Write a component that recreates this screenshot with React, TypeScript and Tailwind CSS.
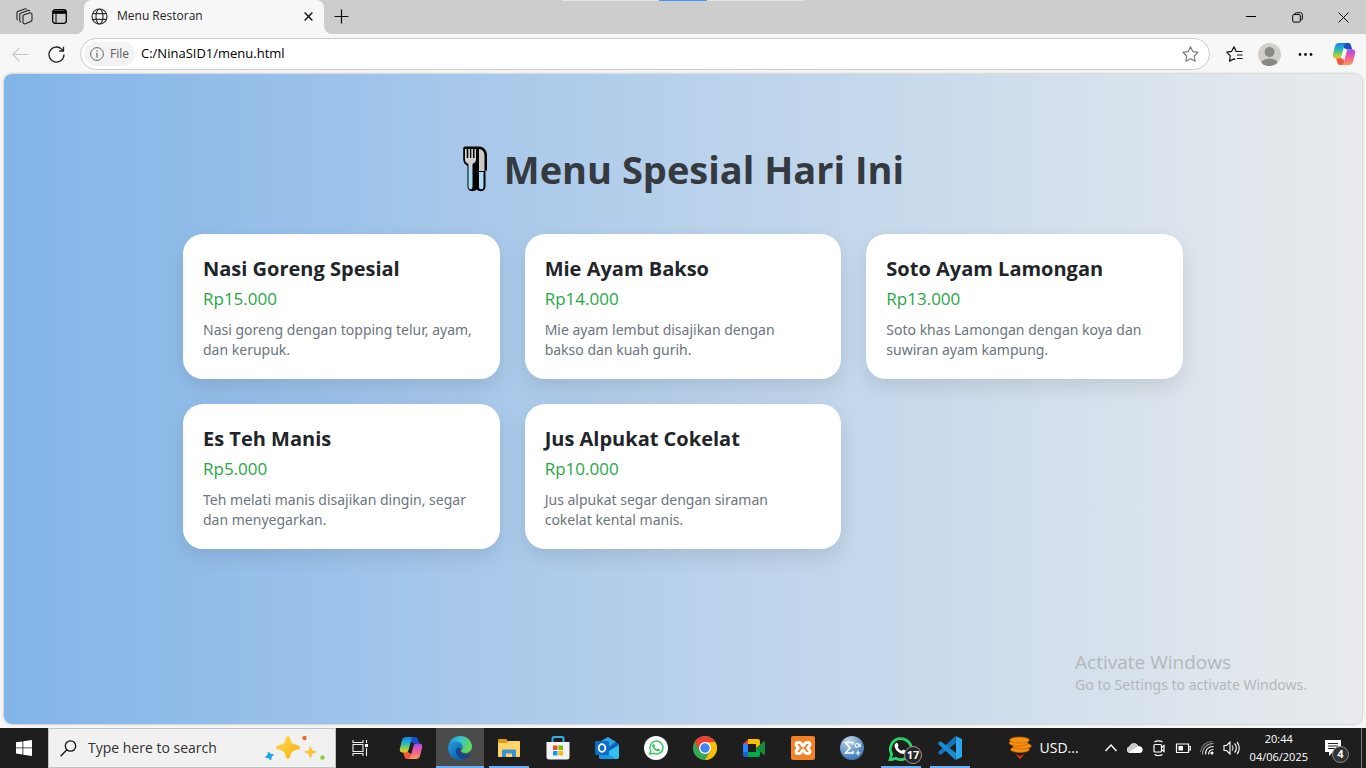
import React from "react";

type Dish = { name: string; price: string; description: string };

const dishes: Dish[] = [
  { name: "Nasi Goreng Spesial", price: "Rp15.000", description: "Nasi goreng dengan topping telur, ayam, dan kerupuk." },
  { name: "Mie Ayam Bakso", price: "Rp14.000", description: "Mie ayam lembut disajikan dengan bakso dan kuah gurih." },
  { name: "Soto Ayam Lamongan", price: "Rp13.000", description: "Soto khas Lamongan dengan koya dan suwiran ayam kampung." },
  { name: "Es Teh Manis", price: "Rp5.000", description: "Teh melati manis disajikan dingin, segar dan menyegarkan." },
  { name: "Jus Alpukat Cokelat", price: "Rp10.000", description: "Jus alpukat segar dengan siraman cokelat kental manis." },
];

function CopilotLogo({ id }: { id: string }) {
  return (
    <svg width="24" height="24" viewBox="0 0 24 24" aria-hidden="true">
      <defs>
        <linearGradient id={id + "a"} x1="0" y1="0" x2="0" y2="1">
          <stop offset="0" stopColor="#1b7fe8" />
          <stop offset=".4" stopColor="#20b8c8" />
          <stop offset=".72" stopColor="#8bd050" />
          <stop offset="1" stopColor="#f4c52c" />
        </linearGradient>
        <linearGradient id={id + "b"} x1="0" y1="0" x2="0" y2="1">
          <stop offset="0" stopColor="#a64bf0" />
          <stop offset=".5" stopColor="#f0609a" />
          <stop offset="1" stopColor="#ff9b52" />
        </linearGradient>
      </defs>
      <path d="M9 1h7.500c1.400 0 2 1 2.400 2.200L20.300 7.500H15L12 6z" fill="#1650cf" />
      <path d="M15 23H8c-1.400 0-2-.8-2.400-2L4 16h5l3 2z" fill="#ee5a3a" />
      <path d="M7 1h7.500c-1.500.5-2 2-2.400 3.500L9.500 14c-.5 1.700-1.300 2.500-3 2.500H3.700C1.400 16.500.3 15 .9 12.500L3 4C3.700 2 5 1 7 1z" fill={"url(#" + id + "a)"} />
      <path d="M17 23H9.500c1.500-.5 2-2 2.400-3.500L14.500 10c.5-1.700 1.300-2.500 3-2.500h2.800c2.300 0 3.400 1.500 2.800 4L21 20c-.7 2-2 3-4 3z" fill={"url(#" + id + "b)"} />
    </svg>
  );
}

function TitleBar() {
  return (
    <header className="flex h-[34px] bg-[#f7f7f7]">
      <div className="flex w-[84px] shrink-0 items-center gap-4 rounded-br-lg bg-[#cdcdcd] pl-4 pb-0.5">
        <button aria-label="Workspaces" className="flex size-5 shrink-0 items-center">
          <svg width="17" height="17" viewBox="0 0 17 17" fill="none" stroke="#222" strokeWidth="1.100" strokeLinejoin="round">
            <path d="M8 6.800 13.500 5c1.300-.4 2.500.3 2.500 1.500v5.300c0 .9-.5 1.500-1.300 1.800L9.500 15.800C8.200 16.200 7 15.500 7 14.300V8.200c0-.7.3-1.200 1-1.400z" />
            <path d="M4.800 14.300C4 14 3.800 13.500 3.800 12.800V6.600c0-.8.400-1.300 1.200-1.600l7-2.500c.8-.2 1.400 0 1.800.6" />
            <path d="M1.800 12C1.200 11.700 1 11.200 1 10.600V4.900c0-.8.4-1.300 1.200-1.600L8.800.9c.8-.3 1.500-.1 1.900.4" />
          </svg>
        </button>
        <button aria-label="Tab actions" className="flex size-5 shrink-0 items-center">
          <svg width="15" height="15" viewBox="0 0 15 15" fill="none" stroke="#000" strokeWidth="1.300">
            <rect x=".7" y=".7" width="13.600" height="13.600" rx="2.500" />
            <path d="M1 1.500h13v3.300H1z" fill="#000" stroke="none" />
            <path d="M4 4v10" strokeWidth="1" />
          </svg>
        </button>
      </div>
      <div className="flex w-60 bg-[#cdcdcd]">
        <div className="flex flex-1 items-center rounded-t-lg bg-[#f7f7f7] pl-[7px] pr-2 pb-0.5">
          <svg width="17" height="17" viewBox="0 0 17 17" fill="none" stroke="#333" strokeWidth="1.200">
            <circle cx="8.500" cy="8.500" r="7.500" />
            <ellipse cx="8.500" cy="8.500" rx="3.500" ry="7.500" />
            <path d="M1.700 5.700h13.600M1.700 11.300h13.600" />
          </svg>
          <span className="ml-[9px] flex-1 text-xs text-[#222]">Menu Restoran</span>
          <button aria-label="Close tab" className="flex size-4 items-center justify-center">
            <svg width="9" height="9" viewBox="0 0 9 9" stroke="#111" strokeWidth="1.400"><path d="m.6.600 7.800 7.800M8.400.600.6 8.400" /></svg>
          </button>
        </div>
      </div>
      <div className="flex flex-1 items-center rounded-bl-lg bg-[#cdcdcd] pl-[10px] pb-0.5">
        <button aria-label="New tab">
          <svg width="15" height="15" viewBox="0 0 15 15" stroke="#111" strokeWidth="1.200"><path d="M.5 7.500h14M7.500.5v14" /></svg>
        </button>
      </div>
      <div className="flex items-center bg-[#cdcdcd]">
        <button aria-label="Minimize" className="flex h-full w-[46px] items-center justify-center">
          <svg width="10" height="10" viewBox="0 0 10 10" stroke="#000"><path d="M0 4.500h10" /></svg>
        </button>
        <button aria-label="Restore" className="flex h-full w-[46px] items-center justify-center">
          <svg width="11" height="11" viewBox="0 0 11 11" fill="none" stroke="#000">
            <rect x=".7" y="2.500" width="7.600" height="7.600" rx="1.200" /><path d="M3 2.300V2C3 1.200 3.400.7 4.200.7h4.300c1.200 0 1.800.7 1.800 1.800V7c0 .6-.5 1-1.500 1" />
          </svg>
        </button>
        <button aria-label="Close" className="flex h-full w-[46px] items-center justify-center">
          <svg width="11" height="11" viewBox="0 0 11 11" stroke="#000"><path d="m.5.500 10 10M10.500.500l-10 10" /></svg>
        </button>
      </div>
    </header>
  );
}

function Toolbar() {
  return (
    <div className="flex h-10 items-center bg-[#f7f7f7] pl-3 pr-[10px]">
      <button aria-label="Back" className="w-9">
        <svg width="17" height="15" viewBox="0 0 17 15" fill="none" stroke="#c6c6c6" strokeWidth="1.200"><path d="M16.500 7.500H.8M7.500.7.800 7.500l6.700 6.800" /></svg>
      </button>
      <button aria-label="Refresh" className="w-8">
        <svg width="17" height="17" viewBox="0 0 17 17" fill="none" stroke="#222" strokeWidth="1.300"><path d="M16 8.500a7.500 7.500 0 1 1-2.300-5.400L15.500 5M15.500.8V5h-4.300" /></svg>
      </button>
      <div className="flex h-8 flex-1 items-center rounded-full border border-[#cbcbcb] bg-white pl-[3px] pr-[10px]">
        <span className="flex h-6 items-center gap-1.5 rounded-full bg-[#f3f3f3] px-1.5 text-xs text-[#5c5c5c]">
          <svg width="14" height="14" viewBox="0 0 14 14" fill="none" stroke="#666"><circle cx="7" cy="7" r="6.400" /><path d="M7 6v4.500M7 3.500v1.200" strokeWidth="1.200" /></svg>
          File
        </span>
        <input aria-label="Address" defaultValue="C:/NinaSID1/menu.html" className="ml-1.5 min-w-0 flex-1 bg-transparent text-[13px] text-black outline-none" />
        <button aria-label="Add to favorites">
          <svg width="17" height="16" viewBox="0 0 17 16" fill="none" stroke="#777" strokeWidth="1.100" strokeLinejoin="round"><path d="m8.500.8 2.300 4.800 5.300.7-3.900 3.700 1 5.200-4.700-2.500-4.700 2.500 1-5.200L.9 6.300l5.300-.7z" /></svg>
        </button>
      </div>
      <button aria-label="Favorites" className="ml-4">
        <svg width="17" height="16" viewBox="0 0 17 16" fill="none" stroke="#111" strokeWidth="1.200" strokeLinejoin="round"><path d="M9.500 5.500H16.500M11 9h5.500M11 12.500h5.500M10.200 5.300 8 .8 5.700 5.300.8 6.200l3.500 3.700-.8 5.200L8 12.900l1.300.6" /></svg>
      </button>
      <button aria-label="Profile" className="ml-[15px]">
        <svg width="23" height="23" viewBox="0 0 23 23"><defs><clipPath id="avatar"><circle cx="11.500" cy="11.500" r="11.500" /></clipPath></defs><g clipPath="url(#avatar)"><path d="M0 0h23v23H0z" fill="#d0cec9" /><circle cx="11.500" cy="9" r="5" fill="#8b8783" /><ellipse cx="11.500" cy="21" rx="8.500" ry="5.500" fill="#8b8783" /></g></svg>
      </button>
      <button aria-label="Settings and more" className="ml-[17px]">
        <svg width="15" height="5" viewBox="0 0 15 5" fill="#111"><circle cx="2" cy="2.500" r="1.400" /><circle cx="7.500" cy="2.500" r="1.400" /><circle cx="13" cy="2.500" r="1.400" /></svg>
      </button>
      <button aria-label="Copilot" className="ml-[19px]"><CopilotLogo id="side" /></button>
    </div>
  );
}

function Cutlery() {
  return (
    <svg width="26" height="48" viewBox="0 0 26 48" aria-hidden="true">
      <path d="M3 1.500h14c5 0 8 4 8 9v15h-1.500v16c0 5-6 6-9 3-3 3-9 2-9-3V21C2.500 19 1.200 17 1.200 14V3.500c0-1.200.7-2 1.800-2z" fill="#000" />
      <path d="M17 4c4 .5 5.500 3.500 5.500 7v15H17z" fill="#c9c9c9" />
      <path d="M17 27h4.500v15c0 3-4.500 3-4.500 0z" fill="#aadcf5" />
      <path d="M3 4v11c0 2 2 3 3.500 4v4h4v-4C12 18 14 17 14 15V4h-1.500v9H11V4H9.300v9H8V4H6.300v9H4.700V4z" fill="#d0d0d0" />
      <path d="M6.500 23h4v19c0 3-4 3-4 0z" fill="#aadcf5" />
    </svg>
  );
}

function MenuPage() {
  return (
    <main className="relative mx-1 mb-1 flex-1 rounded-lg bg-linear-to-r from-[#82b4e8] via-[#b8d1eb] to-[#e9ebed] px-5 pt-[65px] shadow-[0_0_3px_rgba(0,0,0,0.3)]">
      <h1 className="flex items-center justify-center gap-4 text-[38px] leading-[60px] font-bold text-[#343a40]">
        <Cutlery />
        Menu Spesial Hari Ini
      </h1>
      <div className="mx-auto mt-[35px] grid max-w-[1000px] grid-cols-3 gap-[25px]">
        {dishes.map((dish) => (
          <article key={dish.name} className="rounded-[20px] bg-white px-5 pt-5 pb-[19px] shadow-[0_8px_20px_rgba(0,0,0,0.1)]">
            <h2 className="text-xl leading-[30px] font-bold text-[#212529]">{dish.name}</h2>
            <p className="text-[17px] leading-[30px] text-[#28a745]">{dish.price}</p>
            <p className="mt-1.5 pr-1.5 font-['Noto_Sans',sans-serif] text-sm leading-5 text-[#6c757d]">{dish.description}</p>
          </article>
        ))}
      </div>
      <aside className="absolute right-[55px] bottom-[28px] text-[#b3b7bb]">
        <p className="text-[19px] leading-6">Activate Windows</p>
        <p className="font-['Noto_Sans',sans-serif] text-sm leading-[22px]">Go to Settings to activate Windows.</p>
      </aside>
    </main>
  );
}

const whatsappOutline = "M3.500 20.500 5 15.500A9 9 0 1 1 8.500 19z";
const phone = "M8.300 6.500c.5-.5 1.300-.5 1.600.2l.8 1.800c.2.500-.8 1.400-.7 1.800.8 1.600 2 2.600 3.600 3.300.5.200 1.300-1.300 1.800-1.100l1.900.9c.6.300.5 1.100.2 1.700-.5 1-1.900 1.500-3 1.300-3.800-.7-6.600-3.600-7.400-6.800-.3-1.200.3-2.300 1.200-3.100z";

const apps: { label: string; running?: boolean; active?: boolean; icon: React.ReactNode }[] = [
  { label: "Copilot", icon: <CopilotLogo id="task" /> },
  {
    label: "Microsoft Edge", running: true, active: true,
    icon: (
      <svg width="26" height="26" viewBox="0 0 26 26">
        <defs>
          <linearGradient id="edgeTop" x1="0" x2="1" y1="0" y2=".3"><stop stopColor="#2296e2" /><stop offset=".5" stopColor="#35c2d4" /><stop offset="1" stopColor="#65d957" /></linearGradient>
          <linearGradient id="edgeSide" x2="1" y2="1"><stop stopColor="#239ce2" /><stop offset="1" stopColor="#0b549e" /></linearGradient>
        </defs>
        <path d="M1.500 11C2.500 5 7 1 13 1c7 0 12 5 12 10.500 0 4-3 6.500-6.500 6.500-3 0-4.500-1.300-4.500-2.200 0-.8 1.500-1.300 1.500-3.500C15.500 9 12 7 8 7c-3 0-5.500 1.700-6.500 4z" fill="url(#edgeTop)" />
        <path d="M1 13c0-4 3.500-6.500 8-6.500 3.500 0 6.500 2.300 6.500 5.300 0 1-.4 2-1 2.700-2-2.300-5-1.500-5 1.800 0 4 4 8 9.500 7-2 1.200-4 1.700-6 1.700-7 0-12-5.500-12-12z" fill="url(#edgeSide)" />
        <path d="M10 13c-3 5 1 10.500 7 10.700 3-.5 5-2.200 6.700-4.200.4-.6 0-1-.5-.7-5 2.200-10.500.2-11-3.300-.1-1.300.3-1.800 1-2.300-1-.8-2.300-.9-3.200-.2z" fill="#11478c" />
      </svg>
    ),
  },
  {
    label: "File Explorer", running: true,
    icon: (
      <svg width="22" height="20" viewBox="0 0 22 20"><path d="M0 2c0-.6.400-1 1-1h7l2 2v4H0z" fill="#e19c13" /><path d="M0 5h9l1.500-2H21c.6 0 1 .4 1 1v14c0 .6-.4 1-1 1H1c-.6 0-1-.4-1-1z" fill="#fcd467" /><path d="M4 19v-6c0-1 .6-1.500 1.500-1.500h11c1 0 1.500.5 1.500 1.500v6h-4v-3.500H8V19z" fill="#3b91d6" /></svg>
    ),
  },
  {
    label: "Microsoft Store",
    icon: (
      <svg width="24" height="26" viewBox="0 0 24 26"><path d="M.5 7h23v15c0 1.700-1 2.500-2.500 2.500H3c-1.500 0-2.500-.8-2.500-2.500z" fill="#f3f3f3" /><path d="M6.500 7V3.500c0-1 .5-1.500 1.500-1.500h8c1 0 1.500.5 1.500 1.500V7" fill="none" stroke="#2ab1e6" strokeWidth="2" /><path d="M7 10.500h4.500V15H7z" fill="#f25022" /><path d="M12.500 10.500H17V15h-4.500z" fill="#7fba00" /><path d="M7 16h4.500v4.500H7z" fill="#00a4ef" /><path d="M12.500 16H17v4.500h-4.500z" fill="#ffb900" /></svg>
    ),
  },
  {
    label: "Outlook",
    icon: (
      <svg width="26" height="24" viewBox="0 0 26 24"><path d="m5 8 9-6.500L25 8v3L8 18z" fill="#1265b5" /><path d="m7 5 7-4 8 5-9 6z" fill="#2fa4e7" /><path d="M25 9v12c0 1-.8 2-2 2H7c-1 0-2-.8-2-2z" fill="#35c0f2" /><path d="m5 13 17 10H7c-1 0-2-.8-2-2z" fill="#1599df" /><rect x="1" y="5" width="14" height="14" rx="1.200" fill="#0f6cc4" /><ellipse cx="8" cy="12" rx="3.300" ry="3.800" fill="none" stroke="#fff" strokeWidth="1.800" /></svg>
    ),
  },
  {
    label: "WhatsApp Business",
    icon: (
      <svg width="24" height="24" viewBox="0 0 24 24"><circle cx="12" cy="12" r="12" fill="#fff" /><g transform="translate(3.200 3.500) scale(.72)"><path d={whatsappOutline} fill="none" stroke="#35c85a" strokeWidth="2" /><path d={phone} fill="#35c85a" /></g></svg>
    ),
  },
  {
    label: "Google Chrome",
    icon: (
      <svg width="24" height="24" viewBox="0 0 24 24"><circle cx="12" cy="12" r="12" fill="#34a853" /><path d="M12 0c4.400 0 8.300 2.400 10.400 6H12L6.800 15 1.600 6C3.700 2.400 7.500 0 12 0z" fill="#ea4335" /><path d="M22.400 6A12 12 0 0 1 12 24l5.200-9L12 6z" fill="#fbbc05" /><circle cx="12" cy="12" r="6" fill="#fff" /><circle cx="12" cy="12" r="4.700" fill="#4285f4" /></svg>
    ),
  },
  {
    label: "Google Meet",
    icon: (
      <svg width="22" height="20" viewBox="0 0 22 20"><path d="M0 6 5.500 1v5z" fill="#ea4335" /><path d="M0 6h5v8H0z" fill="#2684fc" /><path d="M0 14h5v5H2c-1 0-2-.8-2-2z" fill="#1565d8" /><path d="M5 1h10c1 0 2 .8 2 2v5l-4 3V6H5z" fill="#ffba00" /><path d="M5 14h8v-4l4 3v4c0 1-.8 2-2 2H5z" fill="#00ac47" /><path d="m13 10 7.500-6.500c.6-.5 1.500-.2 1.500.6v12c0 .8-.9 1-1.500.6z" fill="#18883a" /></svg>
    ),
  },
  {
    label: "XAMPP",
    icon: (
      <svg width="24" height="24" viewBox="0 0 24 24"><rect width="24" height="24" rx="2" fill="#f48024" /><path d="M7 6.500h1.500c2.500 0 2 3.500 3.500 3.500s1-3.500 3.500-3.500H17c2.500 0 2.500 3 .8 4-1.300.8-1.300 2.200 0 3 1.700 1 1.700 4-.8 4h-1.500c-2.500 0-2-3.500-3.500-3.500s-1 3.500-3.500 3.500H7c-2.500 0-2.500-3-.8-4 1.300-.8 1.300-2.200 0-3-1.700-1-1.700-4 .8-4z" fill="none" stroke="#fff" strokeWidth="3" /></svg>
    ),
  },
  {
    label: "SPSS",
    icon: (
      <svg width="24" height="24" viewBox="0 0 24 24"><defs><radialGradient id="stat" cx=".35" cy=".2" r=".8"><stop stopColor="#bfd7ed" /><stop offset="1" stopColor="#3b76b1" /></radialGradient></defs><circle cx="12" cy="12" r="12" fill="url(#stat)" /><path d="M13 8.500V6.500H5.500L10 12l-4.500 5H13v-2" fill="none" stroke="#fff" strokeWidth="1.600" /><path d="M20.500 7.500c-1 4-5 5-5.300 2-.3-3 4-2.500 5.600 1.500M15.500 17h5M18 14.500v5" fill="none" stroke="#fff" strokeWidth="1.200" /></svg>
    ),
  },
  {
    label: "WhatsApp", running: true,
    icon: (
      <span className="relative flex">
        <svg width="26" height="26" viewBox="1 -1 24 24"><path d={whatsappOutline} transform="translate(-1 0) scale(1.080)" fill="none" stroke="#26d366" strokeWidth="2.400" /><path d={phone} fill="#fff" /></svg>
        <span className="absolute top-[11px] left-4 flex size-[18px] items-center justify-center rounded-full border border-[#999] bg-[#262626] text-[11px] font-bold text-white">17</span>
      </span>
    ),
  },
  {
    label: "Visual Studio Code", running: true,
    icon: (
      <svg width="24" height="24" viewBox="0 0 24 24"><path d="m17.500 0 .5 7L3 18.500c-.4.3-.8.300-1.200 0L.5 17.300c-.5-.5-.5-1 0-1.500z" fill="#1477bd" /><path d="M17.500 24 .5 8.200c-.5-.5-.5-1 0-1.500l1.300-1.200c.4-.3.800-.3 1.200 0L18 17z" fill="#1a8dd5" /><path d="M17.500 0 23 2.500c.6.300 1 .8 1 1.500v16c0 .7-.4 1.200-1 1.500L17.500 24l.5-1V1z" fill="#2ba7ec" /></svg>
    ),
  },
];

function Taskbar() {
  return (
    <footer className="flex h-10 items-stretch bg-[#1e1e1e] text-white">
      <button aria-label="Start" className="flex w-12 items-center justify-center">
        <svg width="16" height="16" viewBox="0 0 16 16" fill="#fff"><path d="M0 2.300 6.500 1.400v6.100H0zM7.300 1.300 16 0v7.500H7.300zM0 8.300h6.500v6.200L0 13.600zM7.300 8.300H16V16l-8.700-1.300z" /></svg>
      </button>
      <label className="flex w-72 items-center border border-[#c2c2c2] bg-[#f1f1f1] pl-[11px] pr-2">
        <svg width="17" height="17" viewBox="0 0 17 17" fill="none" stroke="#111" strokeWidth="1.300"><circle cx="10.500" cy="6" r="5.200" /><path d="M6.900 9.700.6 16.200" /></svg>
        <input aria-label="Search" placeholder="Type here to search" className="ml-[11px] min-w-0 flex-1 bg-transparent text-sm text-black outline-none placeholder:text-[#303030]" />
        <svg width="62" height="26" viewBox="0 0 62 26">
          <defs><linearGradient id="spark" x2="1" y2="1"><stop stopColor="#ffdc4f" /><stop offset="1" stopColor="#f6ae10" /></linearGradient></defs>
          <path d="M23 1c2.500 0 2.300 5.800 4.500 7.500 1.700 1.300 7.500 1.700 7.500 4s-5.800 2.600-7.500 4C25.300 18.300 25.500 24 23 24s-2.300-5.700-4.500-7.500c-1.700-1.400-7.500-1.700-7.500-4s5.800-2.700 7.500-4C20.700 6.800 20.500 1 23 1z" fill="url(#spark)" />
          <path d="M45.500 11c1 0 1 3.500 2 4.300.8.700 4 .6 4 1.700s-3.200 1-4 1.700c-1 .8-1 4.300-2 4.300s-1-3.500-2-4.300c-.8-.7-4-.6-4-1.700s3.200-1 4-1.700c1-.8 1-4.300 2-4.300z" fill="#fcc334" />
          <path d="m3.500 17 2 2.300 3 .5-2.300 2-.5 3.200-2.200-2.300-3-.5 2.300-2z" fill="#18a6ea" stroke="#18a6ea" strokeLinejoin="round" />
          <circle cx="39.500" cy="3" r="2.200" fill="#f2652a" /><circle cx="57.500" cy="22.500" r="2.200" fill="#91c83e" />
        </svg>
      </label>
      <button aria-label="Task view" className="flex w-12 items-center justify-center">
        <svg width="17" height="16" viewBox="0 0 17 16" fill="none" stroke="#eee" strokeWidth="1.100"><path d="M1 0v2.500h10V0M1 16v-2.500h10V16M1 4.500h10v7H1zM14.500 0v3M14.500 8v8" /><path d="M13 4h3v3h-3z" fill="#fff" stroke="none" /></svg>
      </button>
      <nav aria-label="Pinned apps" className="ml-[3px] flex gap-px">
        {apps.map((app) => (
          <button key={app.label} aria-label={app.label} className={"relative flex w-12 items-center justify-center " + (app.active ? "bg-[#4b4b4b]" : "")}>
            {app.icon}
            {app.running && <span className={"absolute bottom-0 h-0.5 bg-[#69b0fa] " + (app.active ? "inset-x-0" : "inset-x-1")} />}
          </button>
        ))}
      </nav>
      <div className="ml-auto flex items-center">
        <button className="flex items-center gap-2 text-sm">
          <svg width="24" height="24" viewBox="0 0 24 24"><path d="M7.500 18 12 23.500l4.500-5.500-4.500 2z" fill="#d83b01" /><g fill="#f7900a" stroke="#b75d08" strokeWidth=".6"><ellipse cx="12" cy="13.500" rx="9.500" ry="3" /><ellipse cx="14" cy="10" rx="9.500" ry="3" /><ellipse cx="10.500" cy="7" rx="9.500" ry="3" /><ellipse cx="11.500" cy="4" rx="10" ry="3" /></g></svg>
          USD...
        </button>
        <div className="ml-[25px] flex items-center gap-2">
          <svg width="14" height="16" viewBox="0 0 14 16" fill="none" stroke="#fff" strokeWidth="1.400"><path d="m1.500 11 5.500-6 5.500 6" /></svg>
          <svg width="17" height="16" viewBox="0 0 17 16"><path d="M4 13a3.300 3.300 0 0 1-.5-6.500C5 2.500 10.500 2 12 6c3 0 4.700 1.700 4.700 3.700 0 2-1.500 3.300-3.200 3.300z" fill="#fff" /><path d="M3.500 6.500C5 2.500 10.500 2 12 6L3 12c-3-1.500-2.200-5 .5-5.500z" fill="#cacaca" /></svg>
          <svg width="16" height="16" viewBox="0 0 16 16" fill="none" stroke="#fff" strokeWidth="1.200"><rect x="3" y="4.500" width="7.500" height="7.500" rx="1" /><path d="m10.500 7.500 2.500-2v6l-2.500-2M3.500 2c2-1.500 6-1.500 8 0M3.500 14.500c2 1.500 6 1.500 8 0" /></svg>
          <svg width="17" height="16" viewBox="0 0 17 16" fill="none" stroke="#fff" strokeWidth="1.200"><path d="M1.500 4h12v8.500h-12zM13.500 6.500h1.800v3.500h-1.800" /><path d="M3.500 6h4.500v4.500H3.500z" fill="#fff" stroke="none" /></svg>
          <svg width="15" height="16" viewBox="0 0 15 16" fill="none" stroke="#fff" strokeWidth="1.100"><path d="M2.500 14.500C2.500 8 7 3.500 13.500 3.500" stroke="#aaa" /><path d="M5.500 14.500c0-5 3-8 8-8M8.500 14.500c0-3 2-5 5-5" /><path d="M.5 12C1.500 5.500 6 1.800 12.500 1.500" stroke="#777" /><circle cx="12" cy="13" r="1.600" fill="#fff" stroke="none" /></svg>
          <svg width="17" height="16" viewBox="0 0 17 16" fill="none" stroke="#fff" strokeWidth="1.100"><path d="M1 5.500h2.500L7 2v12l-3.500-3.500H1zM9 5.500c1.200 1.300 1.200 3.700 0 5M11.500 3.500c2.500 2.300 2.500 6.700 0 9M14 2c3 3.200 3 8.800 0 12" /></svg>
        </div>
        <div className="ml-2.5 text-center text-[11px] leading-[18px]">
          <p>20:44</p>
          <p>04/06/2025</p>
        </div>
        <button aria-label="4 notifications" className="relative ml-4 mr-[13px]">
          <svg width="24" height="24" viewBox="0 0 24 24"><path d="M1 4h16v12H9l-4 4v-4H1z" fill="#fff" /><path d="M4 7.500h10M4 10h10M4 12.500h7" stroke="#222" /></svg>
          <span className="absolute top-[10px] left-2 flex size-[17px] items-center justify-center rounded-full border border-[#8a8a8a] bg-[#333] text-[11px] font-bold">4</span>
        </button>
        <span className="mr-1 h-full w-px bg-[#777]" />
      </div>
    </footer>
  );
}

export default function App() {
  return (
    <div className="relative flex min-h-screen flex-col bg-[#f7f7f7] font-['Open_Sans','Noto_Sans',sans-serif]">
      <div className="absolute top-0 left-1/2 z-10 flex h-px w-[242px] -translate-x-1/2 justify-center bg-[#e4e4e4]">
        <span className="w-12 bg-[#4197f2]" />
      </div>
      <TitleBar />
      <Toolbar />
      <MenuPage />
      <Taskbar />
    </div>
  );
}
